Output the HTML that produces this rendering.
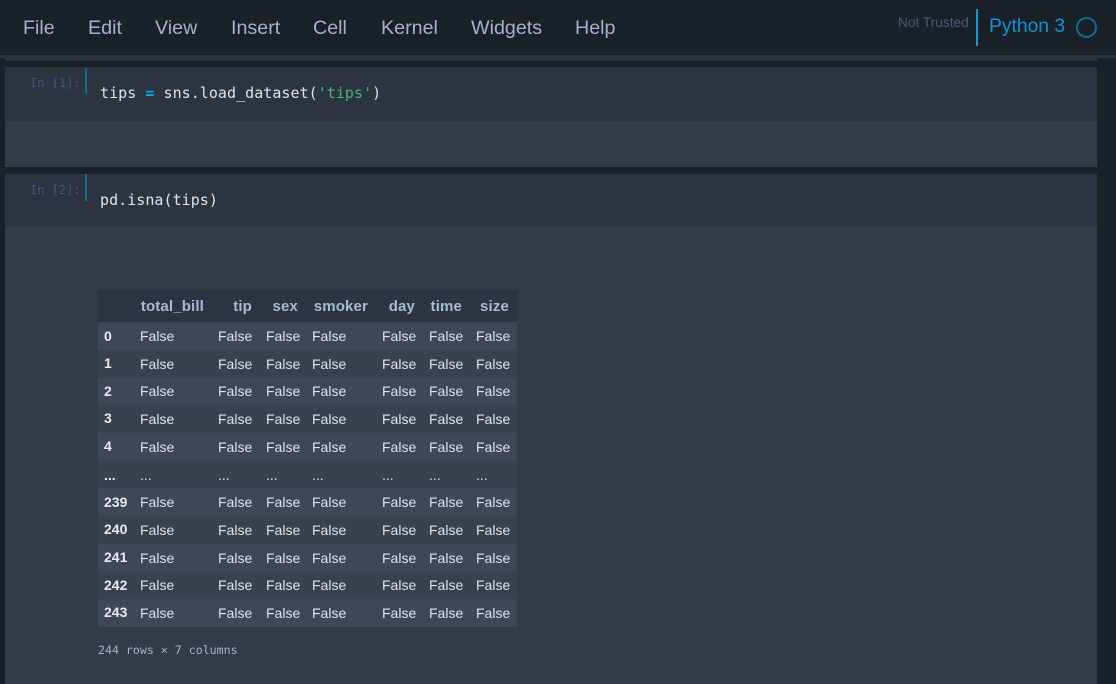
<!DOCTYPE html>
<html><head><meta charset="utf-8">
<style>
html,body{margin:0;padding:0;width:1116px;height:684px;overflow:hidden;background:#1a2028}
body{position:relative;font-family:"Liberation Sans",Arial,sans-serif}
.a{position:absolute;white-space:nowrap}
.m{position:absolute;top:16px;font-size:19.7px;line-height:24px;color:#a0b3d1}
.mono{font-family:"DejaVu Sans Mono","Liberation Mono",monospace}
.code{font-size:15px;line-height:20px;color:#dbe5f1;left:100px;letter-spacing:.04px}
.pr{font-size:12px;line-height:16px;color:#3f5680;left:30px}
table{position:absolute;left:98px;top:290px;border-collapse:collapse;table-layout:fixed;width:419px;font-size:14px;color:#d9e3f0}
td,th{padding:0;overflow:hidden;white-space:nowrap}
th{font-weight:bold}
thead th{background:#2b3440;color:#a9b9d8;text-align:right;padding-right:8px;font-size:15px;letter-spacing:.15px;height:32px;box-sizing:border-box}
tbody th{text-align:left;padding-left:6px;color:#e3ebf5}
tbody th.u{padding-bottom:2px}
tbody td{padding-left:6px}
tbody tr.u td,tbody tr.u th{padding-bottom:2px}
tbody tr:nth-child(odd){background:#3e4755}
tbody tr:nth-child(even){background:#39414e}
</style></head><body>
<div class="a" style="left:0;top:55px;width:1116px;height:3px;background:#2a323d"></div>
<div class="a" style="left:5px;top:58px;width:1092px;height:3px;background:#2a323d"></div>
<div class="a" style="left:5px;top:67px;width:1092px;height:54px;background:#2b3440"></div>
<div class="a" style="left:5px;top:121px;width:1092px;height:46px;background:#343b47"></div>
<div class="a" style="left:5px;top:174px;width:1092px;height:53px;background:#2b3440"></div>
<div class="a" style="left:5px;top:227px;width:1092px;height:457px;background:#343b47"></div>
<div class="a" style="left:85px;top:68px;width:2px;height:26px;background:#126c8e"></div>
<div class="a" style="left:85px;top:174px;width:2px;height:27px;background:#126c8e"></div>

<span class="m a" style="left:23px">File</span>
<span class="m a" style="left:88px">Edit</span>
<span class="m a" style="left:155px">View</span>
<span class="m a" style="left:231px">Insert</span>
<span class="m a" style="left:313px">Cell</span>
<span class="m a" style="left:381px">Kernel</span>
<span class="m a" style="left:471px">Widgets</span>
<span class="m a" style="left:575px">Help</span>

<span class="a" style="left:898px;top:15px;font-size:13.7px;line-height:16px;color:#4a5a76">Not Trusted</span>
<div class="a" style="left:976px;top:9px;width:2px;height:37px;background:#0f9ad6"></div>
<span class="a" style="left:989px;top:15px;font-size:19.3px;line-height:23px;color:#1293d3">Python 3</span>
<div class="a" style="left:1076px;top:17px;width:17px;height:17px;border:2px solid #126c8e;border-radius:50%"></div>

<span class="a mono pr" style="top:75px">In [1]:</span>
<span class="a mono code" style="top:83px">tips <b style="color:#0fa5e9">=</b> sns.load_dataset(<span style="color:#4bb27b">'tips'</span>)</span>
<span class="a mono pr" style="top:182px">In [2]:</span>
<span class="a mono code" style="top:190px">pd.isna(tips)</span>

<table>
<colgroup><col style="width:36px"><col style="width:78px"><col style="width:48px"><col style="width:46px"><col style="width:70px"><col style="width:47px"><col style="width:47px"><col style="width:47px"></colgroup>
<thead><tr><th></th><th>total_bill</th><th>tip</th><th>sex</th><th>smoker</th><th>day</th><th>time</th><th>size</th></tr></thead>
<tbody>
<tr style="height:28px"><th>0</th><td>False</td><td>False</td><td>False</td><td>False</td><td>False</td><td>False</td><td>False</td></tr>
<tr style="height:28px"><th class="u">1</th><td>False</td><td>False</td><td>False</td><td>False</td><td>False</td><td>False</td><td>False</td></tr>
<tr class="u" style="height:27px"><th>2</th><td>False</td><td>False</td><td>False</td><td>False</td><td>False</td><td>False</td><td>False</td></tr>
<tr style="height:28px"><th class="u">3</th><td>False</td><td>False</td><td>False</td><td>False</td><td>False</td><td>False</td><td>False</td></tr>
<tr style="height:28px"><th class="u">4</th><td>False</td><td>False</td><td>False</td><td>False</td><td>False</td><td>False</td><td>False</td></tr>
<tr style="height:27px"><th>...</th><td>...</td><td>...</td><td>...</td><td>...</td><td>...</td><td>...</td><td>...</td></tr>
<tr style="height:28px"><th>239</th><td>False</td><td>False</td><td>False</td><td>False</td><td>False</td><td>False</td><td>False</td></tr>
<tr style="height:28px"><th class="u">240</th><td>False</td><td>False</td><td>False</td><td>False</td><td>False</td><td>False</td><td>False</td></tr>
<tr style="height:27px"><th class="u">241</th><td>False</td><td>False</td><td>False</td><td>False</td><td>False</td><td>False</td><td>False</td></tr>
<tr style="height:28px"><th>242</th><td>False</td><td>False</td><td>False</td><td>False</td><td>False</td><td>False</td><td>False</td></tr>
<tr style="height:28px"><th class="u">243</th><td>False</td><td>False</td><td>False</td><td>False</td><td>False</td><td>False</td><td>False</td></tr>
</tbody></table>

<span class="a mono" style="left:98px;top:642px;font-size:11.6px;line-height:16px;color:#a0b3d1">244 rows × 7 columns</span>
</body></html>
